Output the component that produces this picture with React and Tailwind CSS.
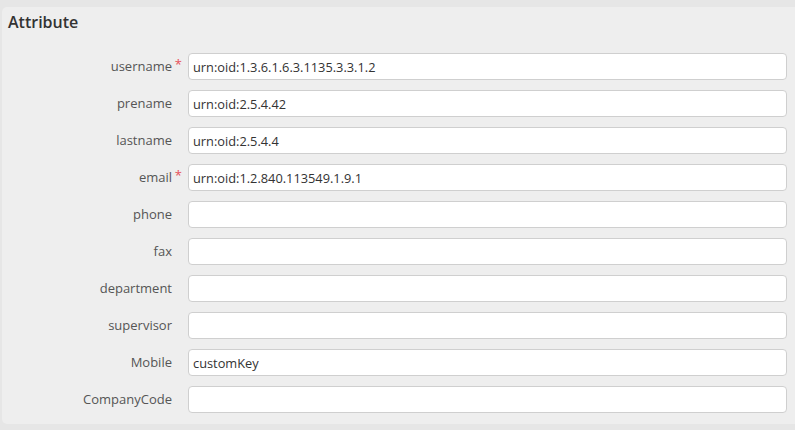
import React from 'react';

const fields = [
  { label: 'username', value: 'urn:oid:1.3.6.1.6.3.1135.3.3.1.2', required: true },
  { label: 'prename', value: 'urn:oid:2.5.4.42' },
  { label: 'lastname', value: 'urn:oid:2.5.4.4' },
  { label: 'email', value: 'urn:oid:1.2.840.113549.1.9.1', required: true },
  { label: 'phone', value: '' },
  { label: 'fax', value: '' },
  { label: 'department', value: '' },
  { label: 'supervisor', value: '' },
  { label: 'Mobile', value: 'customKey' },
  { label: 'CompanyCode', value: '' },
];

export default function App() {
  return (
    <div
      className="w-[795px] h-[430px] overflow-hidden bg-[#e6e6e6] pt-[7px] pl-[2px]"
      style={{ fontFamily: '"Open Sans", "Noto Sans", sans-serif' }}
    >
      <div className="w-[805px] bg-[#eeeeee] rounded-[5px] pt-[4px] pb-[11px]">
        <h2 className="px-[6px] text-[16px] leading-[22px] font-semibold text-[#333]">Attribute</h2>
        <form className="mt-[20px] flex flex-col gap-[10px]">
          {fields.map((f) => (
            <div key={f.label} className="flex items-center">
              <label className="relative w-[186px] pr-[16px] text-right text-[13px] text-[#555]">
                {f.label}
                {f.required && (
                  <span className="absolute right-[6px] top-[-2px] text-[#e8505a]">*</span>
                )}
              </label>
              <input
                type="text"
                defaultValue={f.value}
                className="w-[599px] h-[27px] px-[4px] bg-white border border-[#cfcfcf] rounded-[4px] text-[12.8px] text-[#333] outline-none"
              />
            </div>
          ))}
        </form>
      </div>
    </div>
  );
}
